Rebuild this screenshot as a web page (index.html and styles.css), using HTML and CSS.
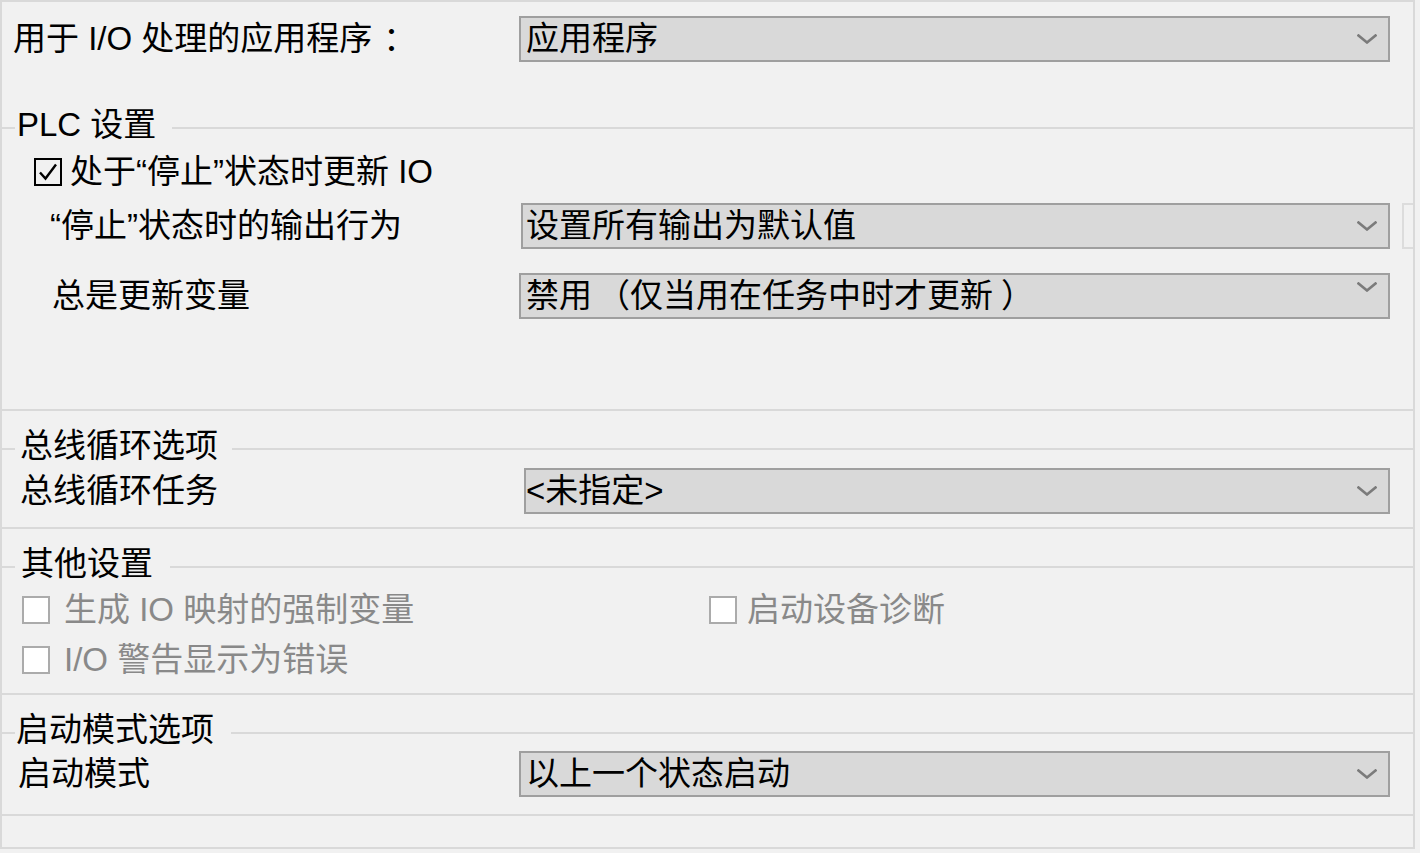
FILE: index.html
```html
<!DOCTYPE html>
<html lang="zh-CN">
<head>
<meta charset="utf-8">
<title>PLC 设置</title>
<link rel="stylesheet" href="styles.css">
</head>
<body>
<div class="panel">
  <section class="sec sec-top">
    <div class="row">
      <span class="label lbl-app">用于 I/O 处理的应用程序<span class="colon">：</span></span>
      <div class="select sel-app">
        <span class="val">应用程序</span>
        <svg class="chev" viewBox="0 0 20 10" width="20" height="10"><path d="M1.5 1.5 L10 8.5 L18.5 1.5"/></svg>
      </div>
    </div>
  </section>

  <section class="sec sec-plc">
    <div class="legend lg-plc"><span>PLC 设置</span></div>
    <div class="check-row">
      <svg class="checked" viewBox="0 0 28 28" width="28" height="28"><rect x="1" y="1" width="26" height="26"/><path d="M6 14.5 L11.5 20.5 L22 6.5"/></svg>
      <span class="check-text">处于“停止”状态时更新 IO</span>
    </div>
    <div class="row row-out">
      <span class="label lbl-out">“停止”状态时的输出行为</span>
      <div class="select sel-out">
        <span class="val">设置所有输出为默认值</span>
        <svg class="chev" viewBox="0 0 20 10" width="20" height="10"><path d="M1.5 1.5 L10 8.5 L18.5 1.5"/></svg>
      </div>
      <div class="stub"></div>
    </div>
    <div class="row row-upd">
      <span class="label lbl-upd">总是更新变量</span>
      <div class="select sel-upd">
        <span class="val">禁用<span class="paren-open">（</span>仅当用在任务中时才更新<span class="paren-close">）</span></span>
        <svg class="chev chev-top" viewBox="0 0 20 10" width="20" height="10"><path d="M1.5 1.5 L10 8.5 L18.5 1.5"/></svg>
      </div>
    </div>
  </section>

  <section class="sec sec-bus">
    <div class="legend lg-bus"><span>总线循环选项</span></div>
    <div class="row">
      <span class="label lbl-bus">总线循环任务</span>
      <div class="select sel-bus">
        <span class="val">&lt;未指定&gt;</span>
        <svg class="chev" viewBox="0 0 20 10" width="20" height="10"><path d="M1.5 1.5 L10 8.5 L18.5 1.5"/></svg>
      </div>
    </div>
  </section>

  <section class="sec sec-other">
    <div class="legend lg-other"><span>其他设置</span></div>
    <div class="opts">
      <div class="opt"><span class="box"></span><span class="opt-text">生成 IO 映射的强制变量</span></div>
      <div class="opt opt-right"><span class="box"></span><span class="opt-text">启动设备诊断</span></div>
      <div class="opt"><span class="box"></span><span class="opt-text">I/O 警告显示为错误</span></div>
    </div>
  </section>

  <section class="sec sec-start">
    <div class="legend lg-start"><span>启动模式选项</span></div>
    <div class="row">
      <span class="label lbl-start">启动模式</span>
      <div class="select sel-start">
        <span class="val">以上一个状态启动</span>
        <svg class="chev" viewBox="0 0 20 10" width="20" height="10"><path d="M1.5 1.5 L10 8.5 L18.5 1.5"/></svg>
      </div>
    </div>
  </section>

  <section class="sec sec-end"></section>
</div>
</body>
</html>
```

FILE: styles.css
```css
* { box-sizing: border-box; }

html, body {
  margin: 0;
  padding: 0;
}

body {
  width: 1420px;
  height: 853px;
  overflow: hidden;
  background: #f1f1f1;
  font-family: "Liberation Sans", "Noto Sans CJK SC", sans-serif;
  font-size: 33px;
  line-height: 36px;
  color: #000;
}

/* centred full-width punctuation, as in the original UI font */
.colon { padding-left: 11px; }
.paren-open { padding-left: 5px; }
.paren-close { padding-left: 8px; }

.panel {
  width: 1415px;
  border: 2px solid #d9d9d9;
  overflow: hidden;
  background: #f1f1f1;
}

/* sections */
.sec-top { height: 108px; padding-top: 14px; }
.sec-plc { padding-bottom: 90px; }
.sec-bus, .sec-other, .sec-start, .sec-end { border-top: 2px solid #d9d9d9; }
.sec-bus { padding-top: 20px; padding-bottom: 13px; }
.sec-other { padding-top: 20px; padding-bottom: 15px; }
.sec-start { padding-top: 20px; padding-bottom: 17px; }
.sec-end { height: 33px; }

/* legend line */
.legend {
  display: flex;
  align-items: center;
  height: 36px;
}
.legend::before {
  content: "";
  flex: none;
  width: 13px;
  height: 2px;
  background: #d9d9d9;
}
.legend::after {
  content: "";
  flex: 1;
  height: 2px;
  background: #d9d9d9;
}
.legend span {
  flex: none;
  margin-top: -6px;
  white-space: nowrap;
  padding-right: 14px;
}
.lg-plc span { padding-left: 2px; padding-right: 16px; }
.lg-bus span { padding-left: 5px; }
.lg-other span { padding-left: 6px; padding-right: 17px; }
.lg-start span { padding-left: 1px; padding-right: 17px; }

/* rows with select */
.row {
  display: flex;
  align-items: center;
  height: 46px;
  padding-right: 23px;
}
.label { flex: none; white-space: nowrap; }
.lbl-app { padding-left: 11px; }
.lbl-out { padding-left: 48px; }
.lbl-upd { padding-left: 50px; }
.lbl-bus { padding-left: 18px; }
.lbl-start { padding-left: 16px; }

.row-out { margin-top: 13px; }
.row-upd { margin-top: 24px; }
.sec-bus .row { margin-top: 1px; }

.select {
  flex: none;
  margin-left: auto;
  height: 46px;
  display: flex;
  align-items: center;
  justify-content: space-between;
  border: 2px solid #9f9f9f;
  background: #d9d9d9;
  padding-left: 5px;
  padding-right: 11px;
}
.sel-app { width: 871px; }
.sel-out { width: 869px; padding-left: 3px; }
.sel-upd { width: 871px; }
.sel-bus { width: 866px; padding-left: 0; }
.sel-start { width: 871px; }

.val { white-space: nowrap; }

.chev {
  flex: none;
  fill: none;
  stroke: #7b7b7b;
  stroke-width: 2.6;
  stroke-linecap: square;
}
.chev-top { align-self: flex-start; margin-top: 7px; }

.stub {
  flex: none;
  width: 30px;
  height: 46px;
  margin-left: 12px;
  margin-right: -42px;
  border: 2px solid #dcdcdc;
}

/* checked checkbox row */
.check-row {
  display: flex;
  align-items: center;
  height: 36px;
  margin-top: 8px;
  padding-left: 32px;
}
.checked {
  flex: none;
  fill: none;
  stroke: #000;
}
.checked rect { stroke-width: 2; }
.checked path { stroke-width: 2.4; }
.check-text { margin-left: 8px; white-space: nowrap; }

/* disabled options */
.opts {
  display: grid;
  grid-template-columns: 687px 1fr;
  row-gap: 14px;
  margin-top: 7px;
  padding-left: 20px;
}
.opt {
  display: flex;
  align-items: center;
  height: 36px;
}
.box {
  flex: none;
  width: 28px;
  height: 28px;
  background: #fff;
  border: 2px solid #ababab;
}
.opt-text {
  margin-left: 14px;
  color: #898989;
  white-space: nowrap;
}
.opt-right .opt-text { margin-left: 10px; }
```
